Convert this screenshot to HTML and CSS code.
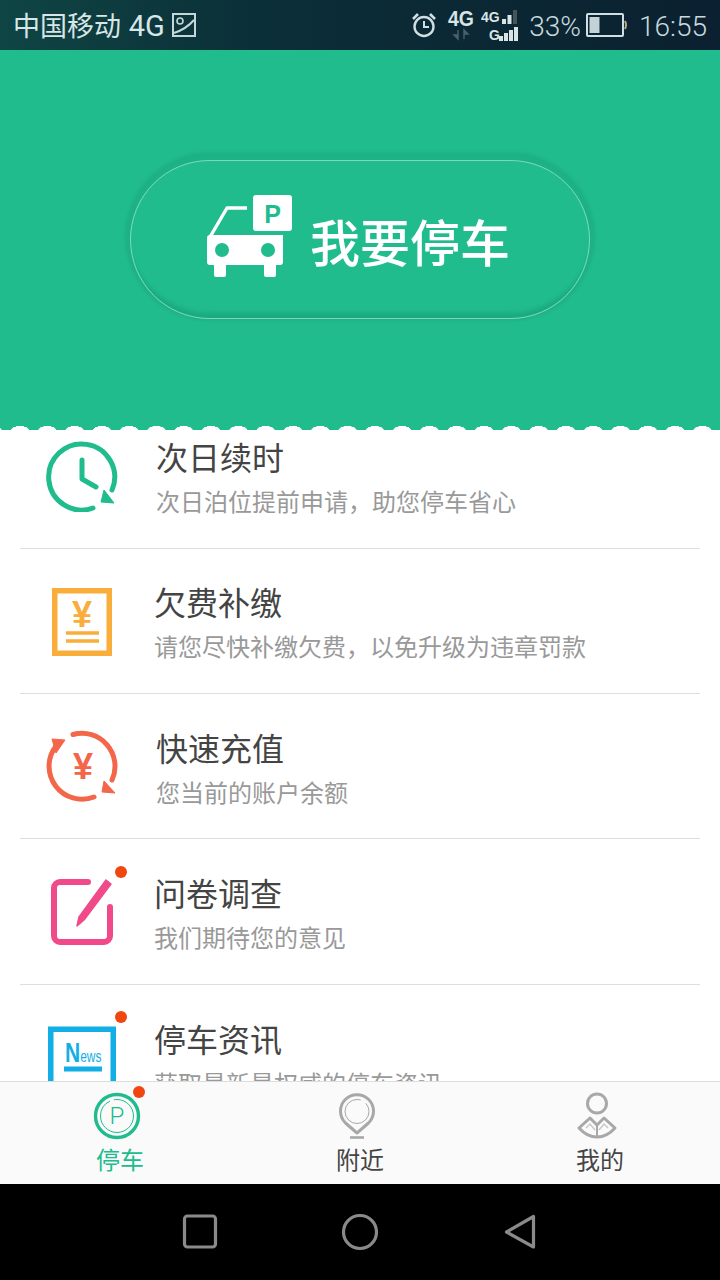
FILE: index.html
```html
<!DOCTYPE html>
<html lang="zh-CN">
<head>
    <meta charset="UTF-8">
    <meta name="viewport" content="width=device-width, initial-scale=1.0">
    <title>停车</title>
    <link rel="stylesheet" href="styles.css">
</head>
<body>
<div class="screen">
    <div class="status-bar">
        <div class="status-left">
            <span class="carrier">中国移动 <span class="carrier-net">4G</span></span>
            <svg class="status-pic" width="24" height="24" viewBox="0 0 24 24">
                <rect x="1" y="1" width="22" height="22" fill="none" stroke="#c4d8da" stroke-width="2"/>
                <circle cx="8" cy="8" r="3" fill="none" stroke="#c4d8da" stroke-width="1.6"/>
                <path d="M2 20 C8 18 16 14 22 7" fill="none" stroke="#c4d8da" stroke-width="2"/>
            </svg>
        </div>
        <div class="status-right">
            <svg width="26" height="26" viewBox="0 0 26 26">
                <circle cx="13" cy="14.5" r="9.5" fill="none" stroke="#d0dfe2" stroke-width="2.4"/>
                <path d="M13 9 V15 H18" fill="none" stroke="#d0dfe2" stroke-width="2"/>
                <path d="M2 7 L7 2 M24 7 L19 2" stroke="#d0dfe2" stroke-width="2.6"/>
            </svg>
            <svg class="status-net" width="32" height="32" viewBox="0 0 32 32">
                <text x="3" y="17" class="net-big" textLength="26" lengthAdjust="spacingAndGlyphs">4G</text>
                <path d="M13 21 V30 L9 26 H13 M19 30 V21 L23 25 H19" fill="#4e6168" stroke="#4e6168" stroke-width="1.4"/>
            </svg>
            <svg class="status-sim" width="38" height="34" viewBox="0 0 38 34">
                <text x="0" y="14" class="net-small">4G</text>
                <rect x="21" y="11" width="4" height="5" fill="#d8e4e6"/>
                <rect x="26.5" y="7" width="4" height="9" fill="#d8e4e6"/>
                <rect x="32" y="2" width="4" height="14" fill="#44565c"/>
                <text x="8" y="32" class="net-small">G</text>
                <rect x="18" y="28" width="4" height="5" fill="#d8e4e6"/>
                <rect x="23" y="25" width="4" height="8" fill="#d8e4e6"/>
                <rect x="28" y="22" width="4" height="11" fill="#d8e4e6"/>
                <rect x="33" y="19" width="4" height="14" fill="#d8e4e6"/>
            </svg>
            <span class="battery-text">33%</span>
            <svg class="status-battery" width="42" height="24" viewBox="0 0 42 24">
                <rect x="1" y="1" width="36" height="22" rx="1" fill="none" stroke="#d0dfe2" stroke-width="2"/>
                <rect x="3.5" y="4" width="10" height="16" fill="#c4d2d6"/>
                <path d="M39 8 Q41 12 39 16" fill="none" stroke="#b5a98a" stroke-width="2"/>
            </svg>
            <span class="clock">16:55</span>
        </div>
    </div>

    <div class="hero">
        <div class="park-btn">
            <svg class="park-icon" width="85" height="82" viewBox="0 0 85 82">
                <path d="M3 42 L20 13 H40" fill="none" stroke="#fff" stroke-width="3.4" stroke-linejoin="round"/>
                <path fill-rule="evenodd" fill="#fff" d="M3 40 H76 V67 A3 3 0 0 1 73 70 H3 A3 3 0 0 1 0 67 V43 A3 3 0 0 1 3 40 Z M15 48 A7 7 0 1 0 15 62 A7 7 0 1 0 15 48 Z M61 48 A7 7 0 1 0 61 62 A7 7 0 1 0 61 48 Z"/>
                <rect x="7" y="68" width="12" height="14" rx="2" fill="#fff"/>
                <rect x="57" y="68" width="12" height="14" rx="2" fill="#fff"/>
                <rect x="46" y="0" width="39" height="36" rx="3" fill="#fff"/>
                <text x="65.5" y="28" class="park-p" text-anchor="middle">P</text>
            </svg>
            <span class="park-text">我要停车</span>
        </div>
        <div class="scallop"></div>
    </div>

    <div class="list">
        <div class="list-inner">
            <div class="row">
                <div class="row-icon">
                    <svg width="72" height="72" viewBox="0 0 72 72">
                        <path d="M47 68 A33 33 0 1 1 66 50" fill="none" stroke="#20bc8e" stroke-width="5" stroke-linecap="round"/>
                        <path d="M36 20 V39 L50 47" fill="none" stroke="#20bc8e" stroke-width="5" stroke-linecap="round" stroke-linejoin="round"/>
                        <path d="M58 50 L68 63 L55 62 Z" fill="#20bc8e" stroke="#20bc8e" stroke-linejoin="round"/>
                    </svg>
                </div>
                <div class="row-text shift-2">
                    <div class="row-title">次日续时</div>
                    <div class="row-sub">次日泊位提前申请，助您停车省心</div>
                </div>
            </div>
            <div class="row">
                <div class="row-icon row-icon-low">
                    <svg width="72" height="72" viewBox="0 0 72 72">
                        <rect x="8.75" y="4.75" width="54.5" height="62.5" fill="none" stroke="#f9ae3b" stroke-width="5.5"/>
                        <text x="36" y="41" class="icon-yen icon-yen-orange" text-anchor="middle">¥</text>
                        <path d="M20 47 H53 M20 55 H53" stroke="#f9ae3b" stroke-width="3.6"/>
                    </svg>
                </div>
                <div class="row-text">
                    <div class="row-title">欠费补缴</div>
                    <div class="row-sub">请您尽快补缴欠费，以免升级为违章罚款</div>
                </div>
            </div>
            <div class="row">
                <div class="row-icon">
                    <svg width="72" height="72" viewBox="0 0 72 72">
                        <path d="M27 4.5 A33 33 0 0 1 66 50" fill="none" stroke="#f4664a" stroke-width="5" stroke-linecap="round"/>
                        <path d="M58 51 L69 63 L56 62 Z" fill="#f4664a" stroke="#f4664a" stroke-linejoin="round"/>
                        <path d="M48 67 A33 33 0 0 1 10 16" fill="none" stroke="#f4664a" stroke-width="5" stroke-linecap="round"/>
                        <path d="M6 9 L19 10 L10 23 Z" fill="#f4664a" stroke="#f4664a" stroke-linejoin="round"/>
                        <text x="37" y="49" class="icon-yen icon-yen-red" text-anchor="middle">¥</text>
                    </svg>
                </div>
                <div class="row-text shift-2">
                    <div class="row-title">快速充值</div>
                    <div class="row-sub">您当前的账户余额</div>
                </div>
            </div>
            <div class="row">
                <div class="row-icon">
                    <svg width="72" height="72" viewBox="0 0 72 72">
                        <path d="M42 6 H14 A6 6 0 0 0 8 12 V60 A6 6 0 0 0 14 66 H58 A6 6 0 0 0 64 60 V31" fill="none" stroke="#f04a8a" stroke-width="6" stroke-linecap="round"/>
                        <path d="M60 4 L65 8 L38 44 L31 50 L33 41 Z" fill="#f04a8a" stroke="#f04a8a" stroke-width="1.5" stroke-linejoin="round"/>
                    </svg>
                    <span class="dot"></span>
                </div>
                <div class="row-text">
                    <div class="row-title">问卷调查</div>
                    <div class="row-sub">我们期待您的意见</div>
                </div>
            </div>
            <div class="row">
                <div class="row-icon">
                    <svg width="72" height="72" viewBox="0 0 72 72">
                        <path d="M4.75 72 V8.25 H67.25 V72" fill="none" stroke="#12aee6" stroke-width="5.5"/>
                        <text x="19" y="40.5" class="news-n" textLength="36.5" lengthAdjust="spacingAndGlyphs">N<tspan class="news-ews">ews</tspan></text>
                        <rect x="18" y="45.5" width="38" height="5" fill="#12aee6"/>
                    </svg>
                    <span class="dot"></span>
                </div>
                <div class="row-text">
                    <div class="row-title">停车资讯</div>
                    <div class="row-sub">获取最新最权威的停车资讯</div>
                </div>
            </div>
        </div>
    </div>

    <div class="tabbar">
        <div class="tab tab-active">
            <div class="tab-icon">
                <svg width="48" height="48" viewBox="0 0 48 48">
                    <circle cx="24" cy="24" r="21.5" fill="none" stroke="#20bc8e" stroke-width="3.4"/>
                    <circle cx="24" cy="24" r="16.5" fill="none" stroke="#20bc8e" stroke-width="1" stroke-dasharray="70 4"/>
                    <text x="24" y="32" class="tab-p" text-anchor="middle">P</text>
                </svg>
                <span class="dot dot-tab"></span>
            </div>
            <span class="tab-label">停车</span>
        </div>
        <div class="tab">
            <div class="tab-icon">
                <svg width="48" height="48" viewBox="0 0 48 48">
                    <path d="M24 41 L12.5 31 A16.5 16.5 0 1 1 35.5 31 Z" fill="none" stroke="#a8a8a8" stroke-width="3" stroke-linejoin="round"/>
                    <circle cx="24" cy="19.5" r="12" fill="none" stroke="#a8a8a8" stroke-width="1" stroke-dasharray="60 6"/>
                    <path d="M17 45.5 H31" stroke="#a8a8a8" stroke-width="2.6"/>
                </svg>
            </div>
            <span class="tab-label">附近</span>
        </div>
        <div class="tab">
            <div class="tab-icon">
                <svg width="48" height="48" viewBox="0 0 48 48">
                    <circle cx="24" cy="11.5" r="9.5" fill="none" stroke="#a8a8a8" stroke-width="3"/>
                    <path d="M6 36 L17 26 L24 33 L31 26 L42 36 Q34 45 24 45 Q14 45 6 36 Z" fill="none" stroke="#a8a8a8" stroke-width="3" stroke-linejoin="round"/>
                    <path d="M24 34 V45" stroke="#a8a8a8" stroke-width="2"/>
                    <path d="M13 36 L17 32 L22 38" fill="none" stroke="#c8c8c8" stroke-width="1.5"/>
                    <path d="M35 36 L31 32 L26 38" fill="none" stroke="#c8c8c8" stroke-width="1.5"/>
                </svg>
            </div>
            <span class="tab-label">我的</span>
        </div>
    </div>

    <div class="navbar">
        <svg width="40" height="40" viewBox="0 0 40 40">
            <rect x="4.5" y="4" width="31" height="31" rx="3" fill="none" stroke="#8a8a8a" stroke-width="3.2"/>
        </svg>
        <svg width="40" height="40" viewBox="0 0 40 40">
            <circle cx="20" cy="20" r="16.5" fill="none" stroke="#8a8a8a" stroke-width="3.2"/>
        </svg>
        <svg width="40" height="40" viewBox="0 0 40 40">
            <path d="M6.5 20 L33.5 4.5 V35 Z" fill="none" stroke="#8a8a8a" stroke-width="3.2" stroke-linejoin="round"/>
        </svg>
    </div>
</div>
</body>
</html>
```

FILE: styles.css
```css
* {
    margin: 0;
    padding: 0;
    box-sizing: border-box;
}

body {
    font-family: "Noto Sans CJK SC", "Noto Sans", sans-serif;
    background: #fff;
}

svg {
    display: block;
}

.screen {
    width: 720px;
    height: 1280px;
    display: flex;
    flex-direction: column;
    overflow: hidden;
}

.status-bar {
    height: 50px;
    flex: none;
    display: flex;
    justify-content: space-between;
    align-items: center;
    padding: 0 13px;
    background: linear-gradient(90deg, #0f4544 0%, #0b2f38 35%, #0b2030 100%);
    color: #d8e6e8;
}

.status-left,
.status-right {
    display: flex;
    align-items: center;
}

.carrier {
    padding-top: 3px;
    font-family: Roboto, "Noto Sans CJK SC", sans-serif;
    font-size: 27px;
    line-height: 47px;
    white-space: nowrap;
}

.carrier-net {
    font-size: 29px;
    margin-left: 1px;
}

.status-pic {
    margin-left: 7px;
}

.status-right svg {
    flex: none;
}

.status-net {
    margin-left: 8px;
}

.status-sim {
    margin-left: 4px;
}

.net-big {
    font-family: "Liberation Sans", sans-serif;
    font-size: 22px;
    font-weight: 700;
    fill: #d8e4e6;
}

.net-small {
    font-family: "Liberation Sans", sans-serif;
    font-size: 14px;
    font-weight: 700;
    fill: #d8e4e6;
}

.battery-text {
    margin-left: 10px;
    padding-top: 2px;
    font-family: Roboto, sans-serif;
    font-size: 28px;
    font-weight: 300;
    color: #c8dade;
}

.status-battery {
    margin-left: 5px;
}

.clock {
    margin-left: 11px;
    padding-top: 2px;
    font-family: Roboto, sans-serif;
    font-size: 28px;
    font-weight: 300;
    color: #c8dade;
}

.hero {
    height: 380px;
    flex: none;
    position: relative;
    display: flex;
    justify-content: center;
    padding-top: 110px;
    background: #20bc8e;
}

.park-btn {
    width: 460px;
    height: 159px;
    border: 1px solid rgba(255, 255, 255, 0.42);
    border-radius: 80px;
    display: flex;
    justify-content: center;
    align-items: center;
    gap: 18px;
    padding-right: 3px;
    box-shadow: 0 -3px 3px 5px rgba(12, 110, 82, 0.14), inset 0 -9px 4px -4px rgba(12, 110, 82, 0.24);
}

.park-icon {
    margin-bottom: 7px;
}

.park-p {
    font-family: "Liberation Sans", sans-serif;
    font-size: 25px;
    font-weight: 700;
    fill: #20bc8e;
}

.park-text {
    margin-top: 1px;
    font-size: 50px;
    font-weight: 500;
    line-height: 60px;
    color: #fff;
    white-space: nowrap;
}

.scallop {
    position: absolute;
    left: 0;
    right: 0;
    bottom: 0;
    height: 4px;
    background-image: radial-gradient(ellipse 9px 4px at 50% 100%, #fff 96%, transparent 100%);
    background-size: 27.3px 4px;
    background-position: 6.35px 0;
}

.list {
    flex: 1;
    min-height: 0;
    overflow: hidden;
    background: #fff;
}

.list-inner {
    margin-top: -26.5px;
}

.row {
    height: 145.33px;
    margin: 0 20px;
    display: flex;
    align-items: center;
    border-bottom: 1px solid #ddd;
}

.row:last-child {
    border-bottom: none;
}

.row-icon {
    width: 72px;
    height: 72px;
    flex: none;
    margin: 0 36px 0 26px;
    position: relative;
}

.row-icon-low {
    margin-top: 2px;
}

.row-text {
    padding-top: 2px;
}

.shift-2 {
    margin-left: 2px;
}

.row-title {
    font-size: 32px;
    line-height: 40px;
    color: #444;
}

.row-sub {
    margin-top: 9px;
    font-size: 24px;
    line-height: 32px;
    color: #999;
    white-space: nowrap;
}

.icon-yen {
    font-family: "Liberation Sans", sans-serif;
    font-size: 36px;
    font-weight: 700;
}

.icon-yen-orange {
    fill: #f9ae3b;
}

.icon-yen-red {
    fill: #f4664a;
}

.news-n {
    font-family: "Liberation Sans", sans-serif;
    font-size: 28px;
    font-weight: 700;
    fill: #12aee6;
}

.news-ews {
    font-size: 16px;
    font-weight: 400;
}

.dot {
    position: absolute;
    top: -10px;
    left: 69px;
    width: 12px;
    height: 12px;
    border-radius: 50%;
    background: #f0460f;
}

.dot-tab {
    top: -6px;
    left: 40px;
}

.tabbar {
    height: 103px;
    flex: none;
    display: flex;
    border-top: 1px solid #ddd;
    background: #fafafa;
}

.tab {
    flex: 1;
    display: flex;
    flex-direction: column;
    align-items: center;
    padding-top: 10px;
}

.tab-icon {
    width: 48px;
    height: 48px;
    margin-right: 7px;
    position: relative;
}

.tab-p {
    font-family: Roboto, sans-serif;
    font-size: 24px;
    font-weight: 300;
    fill: #20bc8e;
}

.tab-label {
    margin-top: 7px;
    font-size: 24px;
    line-height: 24px;
    color: #444;
}

.tab-active .tab-label {
    color: #20bc8e;
}

.navbar {
    height: 96px;
    flex: none;
    display: flex;
    justify-content: center;
    align-items: center;
    gap: 120px;
    background: #000;
}
```
